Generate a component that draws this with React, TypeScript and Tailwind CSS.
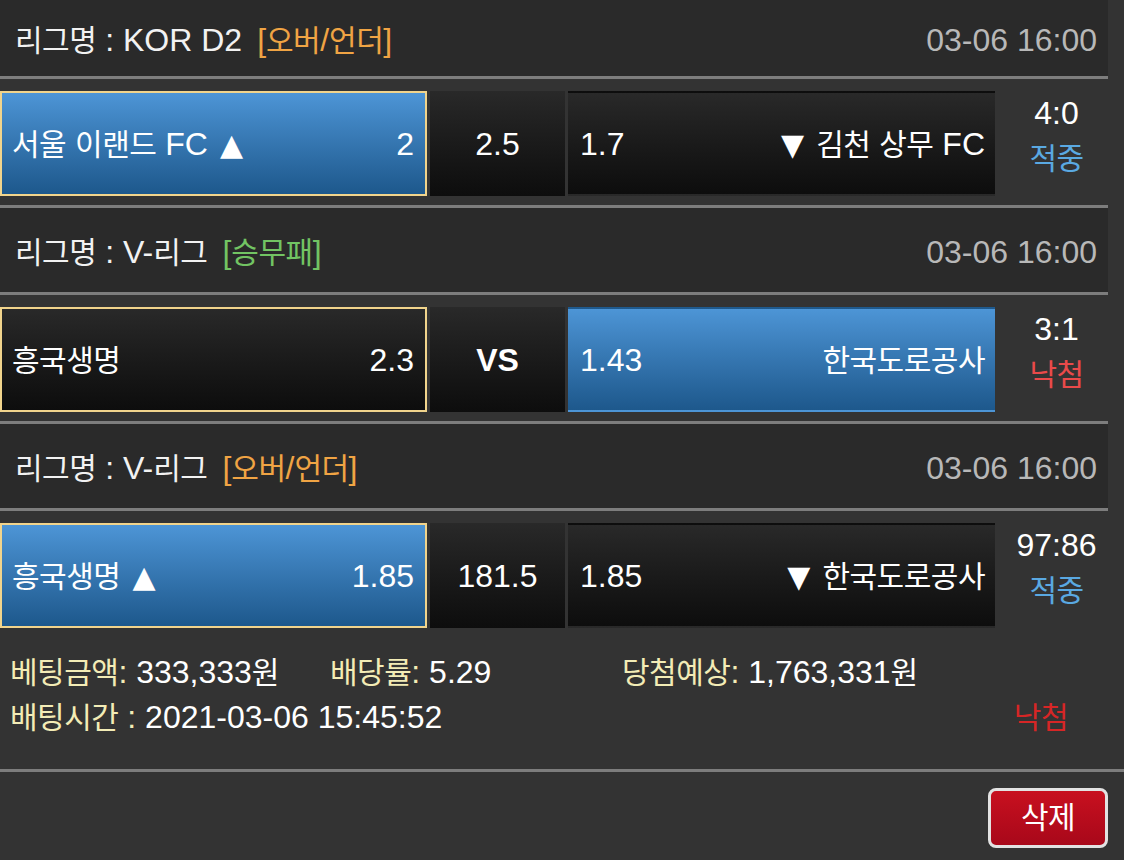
import React from "react";

type Cell = { kind: "blue" | "dark"; selected?: boolean };

const HANGUL = /([\uAC00-\uD7A3]+)/;

function T({ s }: { s: string }) {
  return (
    <>
      {s.split(HANGUL).map((p, i) =>
        i % 2 === 1 ? (
          <span key={i} className="text-[30px] tracking-[-0.5px]">
            {p}
          </span>
        ) : (
          <React.Fragment key={i}>{p}</React.Fragment>
        )
      )}
    </>
  );
}

function Header({ league, tag, tagColor, h }: { league: string; tag: string; tagColor: string; h: string }) {
  return (
    <div className={`flex items-center justify-between bg-[#2a2a2a] pl-[15px] pr-[11px] pt-[4px] border-b-[3px] border-[#7d7d7d] ${h}`}>
      <div className="flex items-baseline">
        <span className="text-[#f2f2f2]">
          <T s={league} />
        </span>
        <span className={`ml-[15px] ${tagColor}`}>
          <T s={tag} />
        </span>
      </div>
      <span className="text-[#b8b8b8]">03-06 16:00</span>
    </div>
  );
}

function boxCls(c: Cell) {
  const bg = c.kind === "blue" ? "bg-gradient-to-b from-[#4d95d6] to-[#1d588c]" : "bg-gradient-to-b from-[#292929] to-[#0d0d0d]";
  const bd = c.selected ? "border-2 border-[#f1d48c]" : "border-2 border-transparent";
  return `${bg} ${bd}`;
}

function Tri({ up }: { up: boolean }) {
  return <span className="font-['DejaVu_Sans',sans-serif] text-[30px]">{up ? "▲" : "▼"}</span>;
}

function Row({
  home,
  homeOdds,
  mid,
  midBold,
  awayOdds,
  away,
  left,
  right,
  score,
  result,
  resultColor,
  line,
  up,
}: {
  home: string;
  homeOdds: string;
  mid: string;
  midBold?: boolean;
  awayOdds: string;
  away: string;
  left: Cell;
  right: Cell;
  score: string;
  result: string;
  resultColor: string;
  line: boolean;
  up?: boolean;
}) {
  return (
    <div className={`flex w-full pt-[12px] pb-[9px] ${line ? "h-[129px] border-b-[3px] border-[#7d7d7d]" : "h-[126px]"}`}>
      <div className={`w-[427px] h-full flex items-center justify-between pl-[10px] pr-[11px] text-white ${boxCls(left)}`}>
        <span>
          <T s={home} />
          {up && (
            <span className="ml-[12px]">
              <Tri up />
            </span>
          )}
        </span>
        <span>{homeOdds}</span>
      </div>
      <div className={`ml-[3px] w-[135px] h-full flex items-center justify-center text-white bg-gradient-to-b from-[#292929] to-[#0d0d0d] ${midBold ? "font-bold" : ""}`}>
        {mid}
      </div>
      <div className={`ml-[3px] w-[427px] h-full flex items-center justify-between pl-[10px] pr-[8px] text-white ${boxCls(right)}`}>
        <span>{awayOdds}</span>
        <span>
          {up && (
            <span className="mr-[12px]">
              <Tri up={false} />
            </span>
          )}
          <T s={away} />
        </span>
      </div>
      <div className="flex-1 h-full flex flex-col items-center justify-center pl-[10px] pb-[16px] leading-[45px]">
        <span className="text-white">{score}</span>
        <span className={resultColor}>
          <T s={result} />
        </span>
      </div>
    </div>
  );
}

function Label({ s }: { s: string }) {
  return (
    <span className="text-[#f3ecb6]">
      <T s={s} />
    </span>
  );
}

function Val({ s }: { s: string }) {
  return (
    <span className="text-white">
      <T s={s} />
    </span>
  );
}

export default function App() {
  return (
    <div className="w-[1124px] h-[860px] overflow-hidden bg-[#333333] text-[32px] leading-none font-['Liberation_Sans','Noto_Sans_CJK_KR',sans-serif]">
      <div className="w-[1108px]">
        <Header league="리그명 : KOR D2" tag="[오버/언더]" tagColor="text-[#f0a444]" h="h-[79px]" />
        <Row
          home="서울 이랜드 FC"
          up
          homeOdds="2"
          mid="2.5"
          awayOdds="1.7"
          away="김천 상무 FC"
          left={{ kind: "blue", selected: true }}
          right={{ kind: "dark" }}
          score="4:0"
          result="적중"
          resultColor="text-[#5aa9e2]"
          line
        />
        <Header league="리그명 : V-리그" tag="[승무패]" tagColor="text-[#72c463]" h="h-[87px]" />
        <Row
          home="흥국생명"
          homeOdds="2.3"
          mid="VS"
          midBold
          awayOdds="1.43"
          away="한국도로공사"
          left={{ kind: "dark", selected: true }}
          right={{ kind: "blue" }}
          score="3:1"
          result="낙첨"
          resultColor="text-[#ea4a4a]"
          line
        />
        <Header league="리그명 : V-리그" tag="[오버/언더]" tagColor="text-[#f0a444]" h="h-[87px]" />
        <Row
          home="흥국생명"
          up
          homeOdds="1.85"
          mid="181.5"
          awayOdds="1.85"
          away="한국도로공사"
          left={{ kind: "blue", selected: true }}
          right={{ kind: "dark" }}
          score="97:86"
          result="적중"
          resultColor="text-[#5aa9e2]"
          line={false}
        />
      </div>
      <div className="pt-[13px] pb-[29px] pl-[10px] leading-[45px] border-b-[3px] border-[#7d7d7d]">
        <div className="flex items-baseline">
          <div className="w-[320px]">
            <Label s="베팅금액:" />
            <Val s=" 333,333원" />
          </div>
          <div className="w-[292px]">
            <Label s="배당률:" />
            <Val s=" 5.29" />
          </div>
          <div>
            <Label s="당첨예상:" />
            <Val s=" 1,763,331원" />
          </div>
        </div>
        <div className="flex items-baseline">
          <div>
            <Label s="배팅시간 :" />
            <Val s=" 2021-03-06 15:45:52" />
          </div>
          <span className="ml-auto mr-[56px] text-[#d62626]">
            <T s="낙첨" />
          </span>
        </div>
      </div>
      <div className="flex justify-end pt-[16px] pr-[16px]">
        <button className="w-[120px] h-[60px] rounded-[8px] border-[3px] border-[#e2e2e2] bg-gradient-to-b from-[#c8101f] to-[#a8081a] text-white flex items-center justify-center">
          <span className="text-[30px] tracking-[-0.5px]">삭제</span>
        </button>
      </div>
    </div>
  );
}
